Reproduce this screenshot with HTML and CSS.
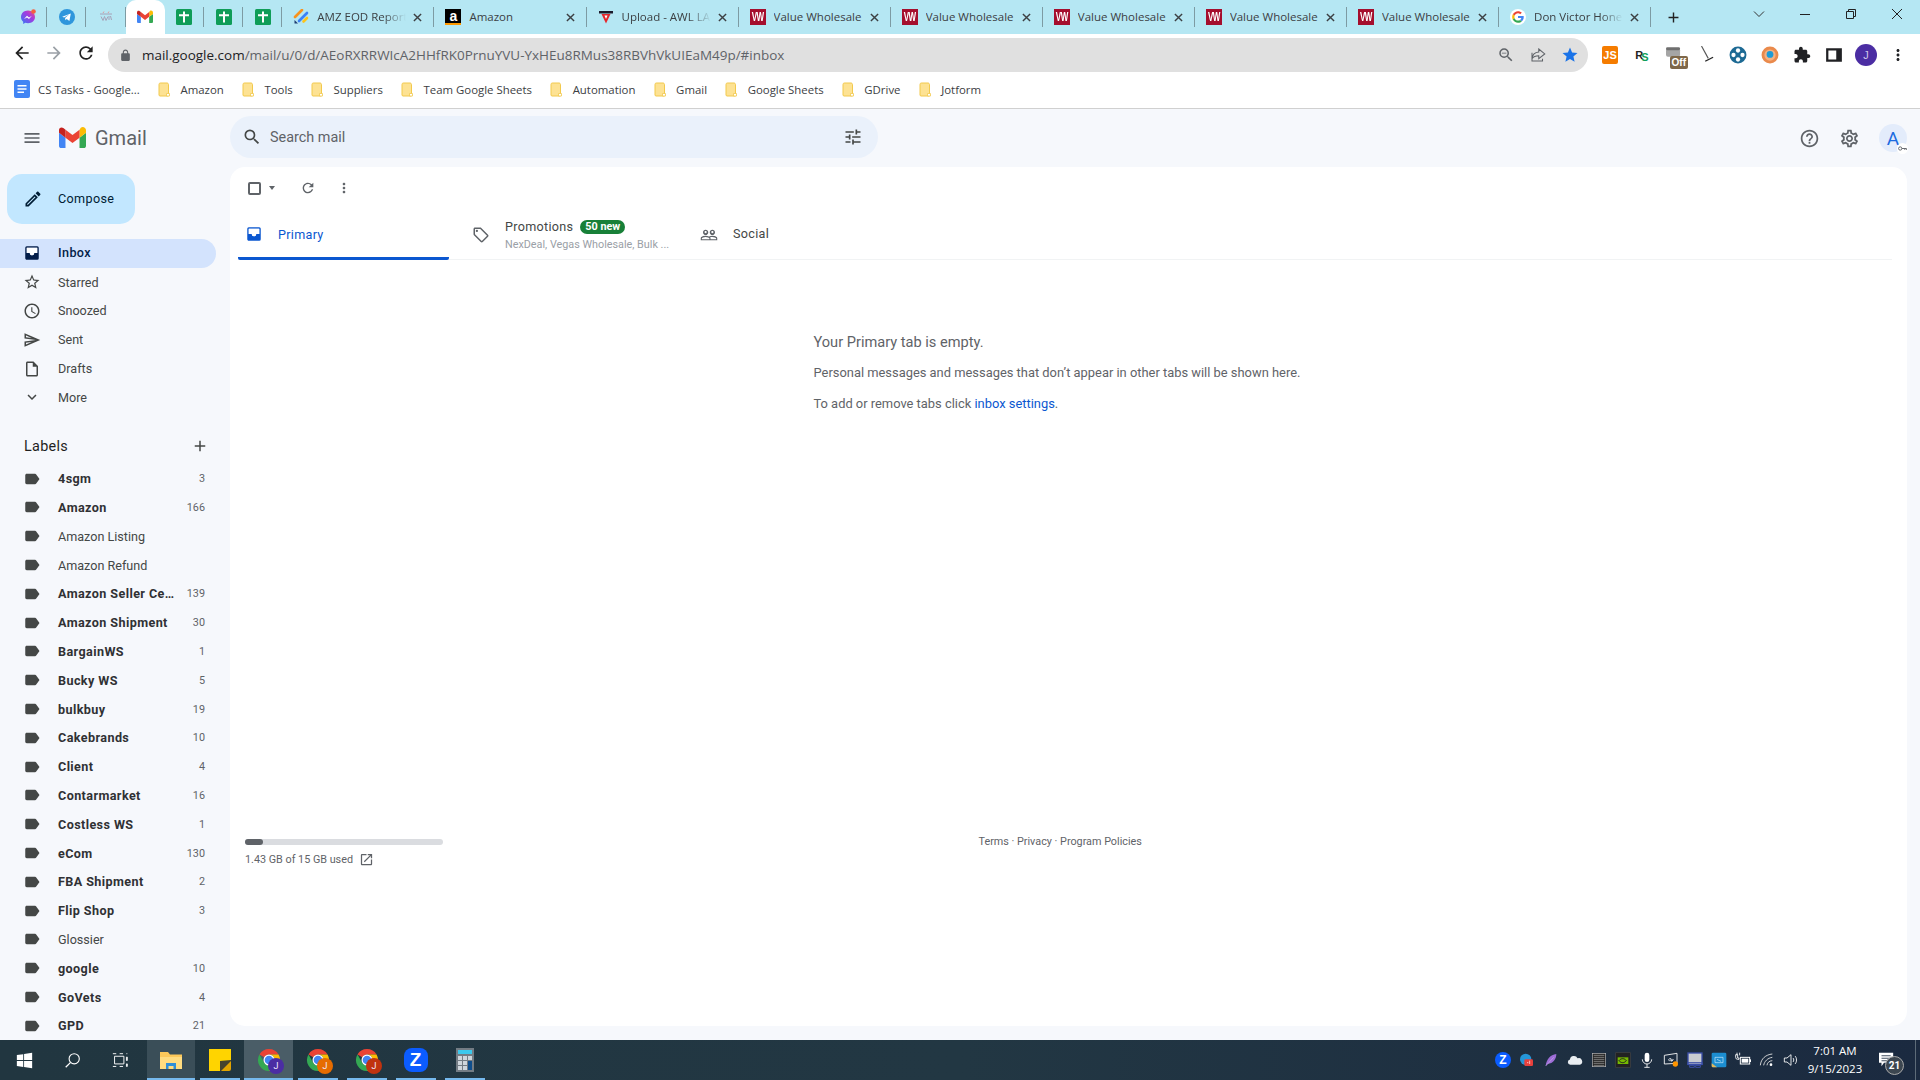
FILE: index.html
```html
<!DOCTYPE html>
<html lang="en">

<head>
  <meta charset="UTF-8">
  <title>Inbox - Gmail</title>
  <link rel="stylesheet" href="styles.css">
</head>

<body>

  <svg class="sprite" width="0" height="0">
    <symbol id="i-close" viewBox="0 0 10 10"><path d="M1 1l8 8M9 1l-8 8" stroke="currentColor" stroke-width="1.6" fill="none"/></symbol>
    <symbol id="i-sheets" viewBox="0 0 16 16"><rect width="16" height="16" rx="1.5" fill="#0f9d58"/><path d="M7 2.500h2v2.800h4v2H9v6.200H7V7.300H3v-2h4z" fill="#fff"/></symbol>
    <symbol id="i-folder" viewBox="0 0 12 15"><path d="M1 2.500C1 1.700 1.500 1 2.300 1H9c.8 0 1.500.7 1.500 1.500V14H2C1.400 14 1 13.500 1 13z" fill="#fde293" stroke="#f2c94c"/><path d="M8.500 14v-2.500h3V14z" fill="#fff" stroke="#f2c94c" stroke-width=".8"/></symbol>
    <symbol id="i-menu" viewBox="0 0 24 24"><path d="M3 18h18v-2H3v2zm0-5h18v-2H3v2zm0-7v2h18V6H3z"/></symbol>
    <symbol id="i-search" viewBox="0 0 24 24"><path d="M15.500 14h-.79l-.28-.27A6.471 6.471 0 0 0 16 9.500 6.500 6.500 0 1 0 9.500 16c1.610 0 3.090-.59 4.230-1.570l.27.28v.79l5 4.990L20.490 19l-4.990-5zm-6 0C7.010 14 5 11.990 5 9.500S7.010 5 9.500 5 14 7.010 14 9.500 11.990 14 9.500 14z"/></symbol>
    <symbol id="i-tune" viewBox="0 0 24 24"><path d="M3 17v2h6v-2H3zM3 5v2h10V5H3zm10 16v-2h8v-2h-8v-2h-2v6h2zM7 9v2H3v2h4v2h2V9H7zm14 4v-2H11v2h10zm-6-4h2V7h4V5h-4V3h-2v6z"/></symbol>
    <symbol id="i-inbox" viewBox="0 0 24 24"><path d="M19 3H5a2 2 0 0 0-2 2v14c0 1.100.9 2 2 2h14a2 2 0 0 0 2-2V5a2 2 0 0 0-2-2zm0 9h-4a3 3 0 0 1-6 0H5V5h14v7z"/><path d="M5 5h14v7h-4a3 3 0 0 1-6 0H5z" fill="#fff"/></symbol>
    <symbol id="i-label" viewBox="0 0 24 24"><path d="M17.630 5.840C17.270 5.330 16.670 5 16 5L5 5.010C3.900 5.010 3 5.900 3 7v10c0 1.100.9 1.990 2 1.990L16 19c.67 0 1.270-.33 1.630-.84L22 12l-4.370-6.160z"/></symbol>
    <symbol id="i-chrome" viewBox="0 0 24 24">
      <path fill="#ea4335" d="M12 1a11 11 0 0 1 9.530 5.500H12a5.500 5.500 0 0 0-4.760 2.750L2.470 6.500A11 11 0 0 1 12 1z"/>
      <path fill="#fbbc04" d="M21.530 6.500A11 11 0 0 1 12 23l4.760-8.250A5.500 5.500 0 0 0 12 6.500z"/>
      <path fill="#34a853" d="M2.470 6.500l4.770 8.250a5.500 5.500 0 0 0 9.520 0L12 23A11 11 0 0 1 2.470 6.500z"/>
      <circle cx="12" cy="12" r="5.500" fill="#fff"/>
      <circle cx="12" cy="12" r="4.300" fill="#4285f4"/>
    </symbol>
  </svg>

  <div class="tabstrip">
    <div class="tab tab_pinned">
      <svg class="fav" viewBox="0 0 16 16"><defs><linearGradient id="msg" x1="0" y1="1" x2="1" y2="0"><stop offset="0" stop-color="#2f7bf6"/><stop offset=".6" stop-color="#a33be0"/><stop offset="1" stop-color="#f5517a"/></linearGradient></defs><path d="M8 1.500C4 1.500 1 4.300 1 8c0 2 .8 3.600 2.200 4.800V15l2.100-1.200c.8.3 1.700.4 2.700.4 4 0 7-2.700 7-6.200s-3-6.500-7-6.500z" fill="url(#msg)"/><path d="M4 10l3-3.200 2 1.600 3-1.600-3 3.200-2-1.600z" fill="#fff"/><circle cx="13.500" cy="2.500" r="2.300" fill="#f4603f"/></svg>
    </div>
    <div class="tab tab_pinned">
      <svg class="fav" viewBox="0 0 16 16"><circle cx="8" cy="8" r="8" fill="#2f96dc"/><path d="M3.200 7.800l8.600-3.400-1.400 7.600-2.700-2-1.300 1.300-.3-2.400 3.900-3.300-4.900 2.800z" fill="#fff"/></svg>
    </div>
    <div class="tab tab_pinned">
      <svg class="fav" viewBox="0 0 16 16"><path d="M2 5h12M3 7.500l2 4 1.500-4 1.500 4 2-4M11 7v4M12.500 7l1 4" stroke="#a6a2b8" stroke-width="1" fill="none"/><path d="M5 4l1-1.500M10 4l1-1.500" stroke="#d99" fill="none"/></svg>
    </div>
    <div class="tab tab_pinned tab_active">
      <svg class="fav" viewBox="0 -2 75 60"><path fill="#4285f4" d="M6 56h12V27L0 13.500V50c0 3.300 2.700 6 6 6"/><path fill="#34a853" d="M57 56h12c3.300 0 6-2.700 6-6V13.500L57 27"/><path fill="#fbbc04" d="M57 5v22l18-13.500V6.500c0-7.400-8.500-11.600-14.400-7.200"/><path fill="#ea4335" d="M18 27V5l19.500 14.600L57 5v22L37.500 41.600"/><path fill="#c5221f" d="M0 6.500v7L18 27V5l-5-3.800C7-3.200 0-.9 0 6.500"/></svg>
    </div>
    <div class="tab tab_pinned"><svg class="fav"><use href="#i-sheets"/></svg></div>
    <div class="tab tab_pinned"><svg class="fav"><use href="#i-sheets"/></svg></div>
    <div class="tab tab_pinned"><svg class="fav"><use href="#i-sheets"/></svg></div>

    <div class="tab">
      <svg class="fav" viewBox="0 0 16 16"><path d="M9 1L2 8" stroke="#f7931e" stroke-width="2.600" stroke-linecap="round"/><path d="M14 4L6 12" stroke="#3b82f6" stroke-width="2.600" stroke-linecap="round"/><path d="M14 9l-3.500 3.500" stroke="#fcc419" stroke-width="2.600" stroke-linecap="round"/><path d="M1.500 11v3.500H5z" fill="#1c3a6e"/></svg>
      <span class="tab__title tab__title_fade">AMZ EOD Report</span>
      <svg class="tab__close"><use href="#i-close"/></svg>
    </div>
    <div class="tab">
      <span class="fav fav_amazon">a</span>
      <span class="tab__title">Amazon</span>
      <svg class="tab__close"><use href="#i-close"/></svg>
    </div>
    <div class="tab">
      <svg class="fav" viewBox="0 0 16 16"><path d="M1 2h14v2.500H1z" fill="#1b1b2b"/><path d="M3.500 5h9L8 14.500z" fill="#e5262b"/><path d="M6.500 6.500h3L8 10z" fill="#fff"/></svg>
      <span class="tab__title tab__title_fade">Upload - AWL LA</span>
      <svg class="tab__close"><use href="#i-close"/></svg>
    </div>
    <div class="tab">
      <span class="fav fav_vw"><span class="fav__tall">VW</span></span>
      <span class="tab__title">Value Wholesale</span>
      <svg class="tab__close"><use href="#i-close"/></svg>
    </div>
    <div class="tab">
      <span class="fav fav_vw"><span class="fav__tall">VW</span></span>
      <span class="tab__title">Value Wholesale</span>
      <svg class="tab__close"><use href="#i-close"/></svg>
    </div>
    <div class="tab">
      <span class="fav fav_vw"><span class="fav__tall">VW</span></span>
      <span class="tab__title">Value Wholesale</span>
      <svg class="tab__close"><use href="#i-close"/></svg>
    </div>
    <div class="tab">
      <span class="fav fav_vw"><span class="fav__tall">VW</span></span>
      <span class="tab__title">Value Wholesale</span>
      <svg class="tab__close"><use href="#i-close"/></svg>
    </div>
    <div class="tab">
      <span class="fav fav_vw"><span class="fav__tall">VW</span></span>
      <span class="tab__title">Value Wholesale</span>
      <svg class="tab__close"><use href="#i-close"/></svg>
    </div>
    <div class="tab">
      <svg class="fav" viewBox="0 0 48 48"><circle cx="24" cy="24" r="24" fill="#fff"/><path fill="#ea4335" d="M24 13c3 0 5.200 1.200 6.600 2.500l4.700-4.600C32.300 8.200 28.500 6.500 24 6.500 17.200 6.500 11.300 10.400 8.400 16.100l5.500 4.300C15.300 16.200 19.300 13 24 13z"/><path fill="#4285f4" d="M41.200 24.400c0-1.400-.1-2.500-.4-3.600H24v6.500h9.900c-.2 1.600-1.300 4.100-3.700 5.700l5.300 4.100c3.600-3.300 5.700-8.100 5.700-12.700z"/><path fill="#fbbc05" d="M13.900 27.600c-.4-1.100-.6-2.300-.6-3.600s.2-2.500.6-3.600l-5.500-4.300C7.200 18.500 6.500 21.200 6.500 24s.7 5.500 1.900 7.900z"/><path fill="#34a853" d="M24 41.500c4.700 0 8.700-1.600 11.500-4.300l-5.300-4.100c-1.500 1-3.400 1.700-6.200 1.700-4.700 0-8.700-3.200-10.100-7.400l-5.500 4.300c2.900 5.900 8.800 9.800 15.600 9.800z"/></svg>
      <span class="tab__title tab__title_fade">Don Victor Hone</span>
      <svg class="tab__close"><use href="#i-close"/></svg>
    </div>

    <svg class="new-tab" viewBox="0 0 24 24"><path d="M19 13h-6v6h-2v-6H5v-2h6V5h2v6h6v2z"/></svg>

    <div class="window-btns">
      <svg class="window-btn" viewBox="0 0 12 12"><path d="M1 3.500l5 5 5-5" fill="none" stroke="#333"/></svg>
      <svg class="window-btn" viewBox="0 0 12 12"><path d="M1 6.500h10" stroke="#222"/></svg>
      <svg class="window-btn" viewBox="0 0 12 12"><path d="M1.500 3.500h7v7h-7zM3.500 3.500v-2h7v7h-2" fill="none" stroke="#222"/></svg>
      <svg class="window-btn" viewBox="0 0 12 12"><path d="M1 1l10 10M11 1L1 11" stroke="#222"/></svg>
    </div>
  </div>

  <div class="toolbar">
    <svg class="toolbar__nav" viewBox="0 0 24 24"><path d="M20 11H7.830l5.590-5.590L12 4l-8 8 8 8 1.410-1.410L7.830 13H20v-2z"/></svg>
    <svg class="toolbar__nav toolbar__nav_off" viewBox="0 0 24 24"><path d="M12 4l-1.410 1.410L16.170 11H4v2h12.170l-5.580 5.590L12 20l8-8z"/></svg>
    <svg class="toolbar__nav" viewBox="0 0 24 24"><path d="M17.650 6.350A7.958 7.958 0 0 0 12 4c-4.420 0-7.990 3.580-7.990 8s3.570 8 7.990 8c3.730 0 6.840-2.550 7.730-6h-2.080A5.990 5.990 0 0 1 12 18c-3.310 0-6-2.690-6-6s2.690-6 6-6c1.660 0 3.140.69 4.220 1.780L13 11h7V4l-2.350 2.350z"/></svg>

    <div class="omnibox">
      <svg class="omnibox__lock" viewBox="0 0 24 24"><path d="M18 8h-1V6c0-2.760-2.240-5-5-5S7 3.240 7 6v2H6c-1.100 0-2 .9-2 2v10c0 1.100.9 2 2 2h12c1.100 0 2-.9 2-2V10c0-1.100-.9-2-2-2zM9 6c0-1.660 1.340-3 3-3s3 1.340 3 3v2H9V6z"/></svg>
      <span class="omnibox__url"><b class="omnibox__host">mail.google.com</b>/mail/u/0/d/AEoRXRRWIcA2HHfRK0PrnuYVU-YxHEu8RMus38RBVhVkUIEaM49p/#inbox</span>
      <svg class="omnibox__icon" viewBox="0 0 24 24"><path d="M15.500 14h-.79l-.28-.27A6.471 6.471 0 0 0 16 9.500 6.500 6.500 0 1 0 9.500 16c1.610 0 3.090-.59 4.230-1.570l.27.28v.79l5 4.990L20.490 19l-4.990-5zm-6 0C7.010 14 5 11.990 5 9.500S7.010 5 9.500 5 14 7.010 14 9.500 11.990 14 9.500 14z"/><path d="M6.500 9h6v1h-6z"/></svg>
      <svg class="omnibox__icon" viewBox="0 0 24 24"><path d="M13 4l8 6.500-8 6.500v-4c-4 0-7 1-9 4 .5-5 3.500-8.500 9-9z M4 9v11h14v-3" fill="none" stroke="#5f6368" stroke-width="1.400"/></svg>
      <svg class="omnibox__icon omnibox__icon_star" viewBox="0 0 24 24"><path d="M12 17.270L18.180 21l-1.640-7.030L22 9.240l-7.190-.61L12 2 9.190 8.630 2 9.240l5.460 4.730L5.820 21z"/></svg>
    </div>

    <div class="ext-bar">
      <span class="ext ext_js">JS</span>
      <span class="ext ext_rs">R<i>S</i></span>
      <span class="ext ext_off"><svg class="ext__can" viewBox="0 0 16 10"><rect x="0" y="1" width="15" height="9" rx="2" fill="#a5a5a5"/><rect x="0" y="0" width="15" height="3" rx="1.500" fill="#6f6f6f"/></svg><span class="ext__badge">Off</span></span>
      <svg class="ext" viewBox="0 0 16 16"><path d="M4 0l6 11" stroke="#555" fill="none"/><path d="M7 13l7-3.500.6 1-7 3.500z" fill="#222"/></svg>
      <svg class="ext" viewBox="0 0 16 16"><circle cx="8" cy="8" r="7.500" fill="#1d6a94"/><circle cx="8" cy="4" r="1.900" fill="#fff"/><circle cx="8" cy="12" r="1.900" fill="#fff"/><circle cx="4" cy="8" r="1.900" fill="#fff"/><circle cx="12" cy="8" r="1.900" fill="#fff"/></svg>
      <svg class="ext" viewBox="0 0 16 16"><circle cx="8" cy="8" r="7.500" fill="#ea8a4c"/><circle cx="8" cy="8" r="5" fill="#f4b183"/><circle cx="8" cy="7.500" r="3" fill="#1e9bd6"/></svg>
      <svg class="ext ext_icon" viewBox="0 0 24 24"><path d="M20.500 11H19V7c0-1.100-.9-2-2-2h-4V3.500C13 2.120 11.880 1 10.500 1S8 2.120 8 3.500V5H4c-1.100 0-1.990.9-1.990 2v3.800H3.500c1.490 0 2.700 1.210 2.700 2.700s-1.210 2.700-2.700 2.700H2V20c0 1.100.9 2 2 2h3.800v-1.500c0-1.490 1.210-2.700 2.700-2.700 1.490 0 2.700 1.210 2.700 2.700V22H17c1.100 0 2-.9 2-2v-4h1.500c1.380 0 2.500-1.120 2.500-2.500S21.880 11 20.500 11z"/></svg>
      <svg class="ext ext_icon" viewBox="0 0 16 16"><path d="M1 2h14v12H1zM3 4v8h7V4z" fill-rule="evenodd"/></svg>
      <span class="ext ext_avatar">J</span>
      <svg class="ext ext_icon" viewBox="0 0 24 24"><path d="M12 8c1.100 0 2-.9 2-2s-.9-2-2-2-2 .9-2 2 .9 2 2 2zm0 2c-1.100 0-2 .9-2 2s.9 2 2 2 2-.9 2-2-.9-2-2-2zm0 6c-1.100 0-2 .9-2 2s.9 2 2 2 2-.9 2-2-.9-2-2-2z"/></svg>
    </div>
  </div>

  <div class="bookmarks">
    <a class="bookmark">
      <svg class="bookmark__doc" viewBox="0 0 16 18"><path d="M2 0h12a2 2 0 0 1 2 2v14a2 2 0 0 1-2 2H2a2 2 0 0 1-2-2V2a2 2 0 0 1 2-2z" fill="#4285f4"/><path d="M3.500 5h9v1.500h-9zM3.500 8.300h9v1.500h-9zM3.500 11.600h6.500v1.500H3.500z" fill="#fff"/></svg>
      CS Tasks - Google...
    </a>
    <a class="bookmark"><svg class="bookmark__folder"><use href="#i-folder"/></svg>Amazon</a>
    <a class="bookmark"><svg class="bookmark__folder"><use href="#i-folder"/></svg>Tools</a>
    <a class="bookmark"><svg class="bookmark__folder"><use href="#i-folder"/></svg>Suppliers</a>
    <a class="bookmark"><svg class="bookmark__folder"><use href="#i-folder"/></svg>Team Google Sheets</a>
    <a class="bookmark"><svg class="bookmark__folder"><use href="#i-folder"/></svg>Automation</a>
    <a class="bookmark"><svg class="bookmark__folder"><use href="#i-folder"/></svg>Gmail</a>
    <a class="bookmark"><svg class="bookmark__folder"><use href="#i-folder"/></svg>Google Sheets</a>
    <a class="bookmark"><svg class="bookmark__folder"><use href="#i-folder"/></svg>GDrive</a>
    <a class="bookmark"><svg class="bookmark__folder"><use href="#i-folder"/></svg>Jotform</a>
  </div>

  <div class="gmail">
    <div class="brand">
      <svg class="brand__menu"><use href="#i-menu"/></svg>
      <svg class="brand__logo" viewBox="0 -2 75 60"><path fill="#4285f4" d="M6 56h12V27L0 13.500V50c0 3.300 2.700 6 6 6"/><path fill="#34a853" d="M57 56h12c3.300 0 6-2.700 6-6V13.500L57 27"/><path fill="#fbbc04" d="M57 5v22l18-13.500V6.500c0-7.400-8.500-11.600-14.400-7.200"/><path fill="#ea4335" d="M18 27V5l19.500 14.600L57 5v22L37.500 41.600"/><path fill="#c5221f" d="M0 6.500v7L18 27V5l-5-3.800C7-3.200 0-.9 0 6.500"/></svg>
      <span class="brand__name">Gmail</span>
    </div>

    <div class="topbar">
      <div class="search">
        <svg class="search__icon"><use href="#i-search"/></svg>
        <span class="search__text">Search mail</span>
        <svg class="search__tune"><use href="#i-tune"/></svg>
      </div>
      <div class="actions">
        <svg class="actions__icon" viewBox="0 0 24 24"><path d="M11 18h2v-2h-2v2zm1-16C6.480 2 2 6.480 2 12s4.480 10 10 10 10-4.480 10-10S17.520 2 12 2zm0 18c-4.410 0-8-3.590-8-8s3.590-8 8-8 8 3.590 8 8-3.590 8-8 8zm0-14c-2.210 0-4 1.790-4 4h2c0-1.100.9-2 2-2s2 .9 2 2c0 2-3 1.750-3 5h2c0-2.250 3-2.500 3-5 0-2.210-1.790-4-4-4z"/></svg>
        <svg class="actions__icon" viewBox="0 0 24 24"><path d="M19.430 12.980c.04-.32.07-.64.07-.98 0-.34-.03-.66-.07-.98l2.110-1.650c.19-.15.24-.42.12-.64l-2-3.460a.5.500 0 0 0-.61-.22l-2.490 1c-.52-.4-1.080-.73-1.690-.98l-.38-2.650A.488.488 0 0 0 14 2h-4c-.25 0-.46.18-.49.42l-.38 2.650c-.61.25-1.170.59-1.690.98l-2.490-1a.566.566 0 0 0-.18-.03c-.17 0-.34.09-.43.25l-2 3.460c-.13.22-.07.49.12.64l2.110 1.650c-.04.32-.07.65-.07.98 0 .33.03.66.07.98l-2.110 1.650c-.19.15-.24.42-.12.64l2 3.460a.5.500 0 0 0 .61.22l2.490-1c.52.4 1.080.73 1.690.98l.38 2.650c.03.24.24.42.49.42h4c.25 0 .46-.18.49-.42l.38-2.650c.61-.25 1.170-.59 1.690-.98l2.490 1c.06.02.12.03.18.03.17 0 .34-.09.43-.25l2-3.460c.12-.22.07-.49-.12-.64l-2.110-1.650zm-1.980-1.710c.04.31.05.52.05.73 0 .21-.02.43-.05.73l-.14 1.130.89.7 1.080.84-.7 1.210-1.270-.51-1.040-.42-.9.68c-.43.32-.84.56-1.250.73l-1.060.43-.16 1.130-.2 1.350h-1.400l-.19-1.350-.16-1.130-1.060-.43c-.43-.18-.83-.41-1.230-.71l-.91-.7-1.060.43-1.270.51-.7-1.210 1.080-.84.89-.7-.14-1.130c-.03-.31-.05-.54-.05-.74s.02-.43.05-.73l.14-1.130-.89-.7-1.080-.84.7-1.210 1.270.51 1.040.42.9-.68c.43-.32.84-.56 1.250-.73l1.060-.43.16-1.130.2-1.350h1.390l.19 1.350.16 1.130 1.060.43c.43.18.83.41 1.230.71l.91.7 1.060-.43 1.270-.51.7 1.210-1.070.85-.89.7.14 1.130zM12 8c-2.210 0-4 1.790-4 4s1.790 4 4 4 4-1.790 4-4-1.790-4-4-4zm0 6c-1.100 0-2-.9-2-2s.9-2 2-2 2 .9 2 2-.9 2-2 2z"/></svg>
        <div class="account">A
          <span class="account__key"><svg viewBox="0 0 12 12"><circle cx="3.500" cy="6" r="1.800" fill="none" stroke="#5f6368"/><path d="M5.300 6h5v1.500M8.500 6v1.500" fill="none" stroke="#5f6368"/></svg></span>
        </div>
      </div>
    </div>

    <aside class="sidebar">
      <button class="compose">
        <svg class="compose__icon" viewBox="0 0 24 24"><path d="M14.060 9.020l.92.92L5.920 19H5v-.92l9.060-9.060M17.660 3c-.25 0-.51.1-.7.29l-1.830 1.830 3.750 3.750 1.830-1.830a.996.996 0 0 0 0-1.410l-2.340-2.340c-.2-.2-.45-.29-.71-.29zm-3.600 3.190L3 17.250V21h3.750L17.810 9.940l-3.750-3.750z"/></svg>
        Compose
      </button>

      <nav class="nav">
        <a class="nav__item nav__item_active"><svg class="nav__icon"><use href="#i-inbox"/></svg>Inbox</a>
        <a class="nav__item"><svg class="nav__icon" viewBox="0 0 24 24"><path d="M22 9.240l-7.190-.62L12 2 9.190 8.630 2 9.240l5.460 4.730L5.820 21 12 17.270 18.180 21l-1.630-7.030L22 9.240zM12 15.400l-3.760 2.270 1-4.280-3.320-2.880 4.380-.38L12 6.100l1.710 4.040 4.380.38-3.320 2.880 1 4.280L12 15.400z"/></svg>Starred</a>
        <a class="nav__item"><svg class="nav__icon" viewBox="0 0 24 24"><path d="M11.990 2C6.470 2 2 6.480 2 12s4.470 10 9.990 10C17.520 22 22 17.520 22 12S17.520 2 11.990 2zM12 20c-4.420 0-8-3.580-8-8s3.580-8 8-8 8 3.580 8 8-3.580 8-8 8zm.5-13H11v6l5.250 3.150.75-1.230-4.500-2.670z"/></svg>Snoozed</a>
        <a class="nav__item"><svg class="nav__icon" viewBox="0 0 24 24"><path d="M4.010 6.030l7.510 3.220-7.520-1 .01-2.220m7.500 8.720L4 17.970v-2.220l7.510-1M2.010 3L2 10l15 2-15 2 .01 7L23 12 2.010 3z"/></svg>Sent</a>
        <a class="nav__item"><svg class="nav__icon" viewBox="0 0 24 24"><path d="M14 2H6c-1.100 0-1.990.9-1.990 2L4 20c0 1.100.89 2 1.990 2H18c1.100 0 2-.9 2-2V8l-6-6zM6 20V4h7v5h5v11H6z"/></svg>Drafts</a>
        <a class="nav__item"><svg class="nav__icon" viewBox="0 0 24 24"><path d="M16.590 8.590L12 13.170 7.410 8.590 6 10l6 6 6-6z"/></svg>More</a>
      </nav>

      <div class="labels-head">
        <span>Labels</span>
        <svg class="labels-head__add" viewBox="0 0 24 24"><path d="M19 13h-6v6h-2v-6H5v-2h6V5h2v6h6v2z"/></svg>
      </div>

      <div class="labels">
        <a class="label label_unread"><svg class="nav__icon"><use href="#i-label"/></svg><span class="label__name">4sgm</span><span class="label__count">3</span></a>
        <a class="label label_unread"><svg class="nav__icon"><use href="#i-label"/></svg><span class="label__name">Amazon</span><span class="label__count">166</span></a>
        <a class="label"><svg class="nav__icon"><use href="#i-label"/></svg><span class="label__name">Amazon Listing</span></a>
        <a class="label"><svg class="nav__icon"><use href="#i-label"/></svg><span class="label__name">Amazon Refund</span></a>
        <a class="label label_unread"><svg class="nav__icon"><use href="#i-label"/></svg><span class="label__name">Amazon Seller Ce…</span><span class="label__count">139</span></a>
        <a class="label label_unread"><svg class="nav__icon"><use href="#i-label"/></svg><span class="label__name">Amazon Shipment</span><span class="label__count">30</span></a>
        <a class="label label_unread"><svg class="nav__icon"><use href="#i-label"/></svg><span class="label__name">BargainWS</span><span class="label__count">1</span></a>
        <a class="label label_unread"><svg class="nav__icon"><use href="#i-label"/></svg><span class="label__name">Bucky WS</span><span class="label__count">5</span></a>
        <a class="label label_unread"><svg class="nav__icon"><use href="#i-label"/></svg><span class="label__name">bulkbuy</span><span class="label__count">19</span></a>
        <a class="label label_unread"><svg class="nav__icon"><use href="#i-label"/></svg><span class="label__name">Cakebrands</span><span class="label__count">10</span></a>
        <a class="label label_unread"><svg class="nav__icon"><use href="#i-label"/></svg><span class="label__name">Client</span><span class="label__count">4</span></a>
        <a class="label label_unread"><svg class="nav__icon"><use href="#i-label"/></svg><span class="label__name">Contarmarket</span><span class="label__count">16</span></a>
        <a class="label label_unread"><svg class="nav__icon"><use href="#i-label"/></svg><span class="label__name">Costless WS</span><span class="label__count">1</span></a>
        <a class="label label_unread"><svg class="nav__icon"><use href="#i-label"/></svg><span class="label__name">eCom</span><span class="label__count">130</span></a>
        <a class="label label_unread"><svg class="nav__icon"><use href="#i-label"/></svg><span class="label__name">FBA Shipment</span><span class="label__count">2</span></a>
        <a class="label label_unread"><svg class="nav__icon"><use href="#i-label"/></svg><span class="label__name">Flip Shop</span><span class="label__count">3</span></a>
        <a class="label"><svg class="nav__icon"><use href="#i-label"/></svg><span class="label__name">Glossier</span></a>
        <a class="label label_unread"><svg class="nav__icon"><use href="#i-label"/></svg><span class="label__name">google</span><span class="label__count">10</span></a>
        <a class="label label_unread"><svg class="nav__icon"><use href="#i-label"/></svg><span class="label__name">GoVets</span><span class="label__count">4</span></a>
        <a class="label label_unread"><svg class="nav__icon"><use href="#i-label"/></svg><span class="label__name">GPD</span><span class="label__count">21</span></a>
      </div>
    </aside>

    <main class="panel">
      <div class="mail-tools">
        <span class="mail-tools__check"></span>
        <span class="mail-tools__caret"></span>
        <svg class="mail-tools__refresh" viewBox="0 0 24 24"><path d="M17.650 6.350A7.958 7.958 0 0 0 12 4c-4.420 0-7.990 3.580-7.990 8s3.570 8 7.990 8c3.730 0 6.840-2.550 7.730-6h-2.080A5.990 5.990 0 0 1 12 18c-3.310 0-6-2.690-6-6s2.690-6 6-6c1.660 0 3.140.69 4.220 1.780L13 11h7V4l-2.350 2.350z"/></svg>
        <svg class="mail-tools__more" viewBox="0 0 24 24"><path d="M12 8c1.100 0 2-.9 2-2s-.9-2-2-2-2 .9-2 2 .9 2 2 2zm0 2c-1.100 0-2 .9-2 2s.9 2 2 2 2-.9 2-2-.9-2-2-2zm0 6c-1.100 0-2 .9-2 2s.9 2 2 2 2-.9 2-2-.9-2-2-2z"/></svg>
      </div>

      <div class="mail-tabs">
        <div class="mail-tab mail-tab_active">
          <svg class="mail-tab__icon"><use href="#i-inbox"/></svg>
          <span class="mail-tab__name">Primary</span>
        </div>
        <div class="mail-tab">
          <svg class="mail-tab__icon mail-tab__icon_low" viewBox="0 0 24 24"><path d="M21.410 11.580l-9-9C12.050 2.220 11.550 2 11 2H4c-1.100 0-2 .9-2 2v7c0 .55.22 1.050.59 1.420l9 9c.36.36.86.58 1.410.58s1.050-.22 1.410-.59l7-7c.37-.36.59-.86.59-1.410s-.23-1.060-.59-1.420zM13 20.010L4 11V4h7v-.01l9 9-7 7.020z"/><circle cx="6.500" cy="6.500" r="1.500"/></svg>
          <div class="mail-tab__text">
            <div class="mail-tab__row">
              <span class="mail-tab__name">Promotions</span>
              <span class="mail-tab__badge">50 new</span>
            </div>
            <div class="mail-tab__sub">NexDeal, Vegas Wholesale, Bulk ...</div>
          </div>
        </div>
        <div class="mail-tab">
          <svg class="mail-tab__icon mail-tab__icon_low" viewBox="0 0 24 24"><path d="M16.500 13c-1.200 0-3.070.34-4.500 1-1.430-.67-3.300-1-4.500-1C5.330 13 1 14.080 1 16.250V19h22v-2.750c0-2.170-4.330-3.250-6.500-3.250zm-4 4.500h-10v-1.250c0-.54 2.560-1.750 5-1.750s5 1.210 5 1.750v1.250zm9 0H14v-1.250c0-.46-.2-.86-.52-1.220.88-.3 1.960-.53 3.020-.53 2.440 0 5 1.210 5 1.750v1.250zM7.500 12c1.930 0 3.500-1.570 3.500-3.500S9.430 5 7.500 5 4 6.570 4 8.500 5.570 12 7.500 12zm0-5.500c.83 0 1.500.67 1.500 1.500s-.67 1.500-1.500 1.500S6 8.830 6 8s.67-1.500 1.500-1.500zm9 5.500c1.930 0 3.500-1.570 3.500-3.500S18.430 5 16.500 5 13 6.570 13 8.500s1.570 3.500 3.500 3.500zm0-5.500c.83 0 1.500.67 1.500 1.500s-.67 1.500-1.500 1.500S15 8.830 15 8s.67-1.500 1.500-1.500z"/></svg>
          <span class="mail-tab__name mail-tab__name_up">Social</span>
        </div>
      </div>

      <div class="empty">
        <h2 class="empty__title">Your Primary tab is empty.</h2>
        <p class="empty__text">Personal messages and messages that don’t appear in other tabs will be shown here.</p>
        <p class="empty__text">To add or remove tabs click <a class="empty__link">inbox settings</a>.</p>
      </div>

      <footer class="mail-footer">
        <div class="storage">
          <div class="storage__bar"><div class="storage__fill"></div></div>
          <div class="storage__text">1.43 GB of 15 GB used
            <svg class="storage__open" viewBox="0 0 24 24"><path d="M19 19H5V5h7V3H5c-1.110 0-2 .9-2 2v14c0 1.100.89 2 2 2h14c1.100 0 2-.9 2-2v-7h-2v7zM14 3v2h3.590l-9.830 9.830 1.410 1.410L19 6.410V10h2V3h-7z"/></svg>
          </div>
        </div>
        <div class="policies">Terms · Privacy · Program Policies</div>
      </footer>
    </main>
  </div>

  <div class="taskbar">
    <div class="taskbar__start">
      <svg class="tb-icon" viewBox="0 0 20 20"><path d="M1 3.500l7.500-1v7H1zM9.500 2.300L19 1v8.500H9.500zM1 10.500h7.500v7l-7.500-1zM9.500 10.500H19V19l-9.500-1.300z" fill="#fff"/></svg>
    </div>
    <div class="taskbar__start">
      <svg class="tb-icon" viewBox="0 0 20 20"><circle cx="12" cy="8" r="6" fill="none" stroke="#fff" stroke-width="1.300"/><path d="M7.500 12.500L2 18" stroke="#fff" stroke-width="1.500"/></svg>
    </div>
    <div class="taskbar__start">
      <svg class="tb-icon" viewBox="0 0 20 20"><path d="M3 5h11v9H3zM1 2h4M9 2h4M1 17h4M9 17h4M17 2h1M17 6h1v4h-1zM17 14h1v3h-1z" fill="none" stroke="#fff" stroke-width="1.100"/></svg>
    </div>

    <div class="app app_open">
      <svg class="app__icon" viewBox="0 0 24 24"><path d="M1 4h8l2 2.500h12V21H1z" fill="#fcc85a"/><path d="M1 9h22v12H1z" fill="#ffdc80"/><path d="M7 15h10v6h-2.500v-3h-5v3H7z" fill="#2f8fd8"/></svg>
    </div>
    <div class="app app_running">
      <svg class="app__icon" viewBox="0 0 24 24"><path d="M1 1h22v14l-8 8H1z" fill="#ffd400"/><path d="M23 12v9a2 2 0 0 1-2 2h-9z" fill="#e2a400"/><path d="M13 23l10-10v-1l-11 1v10z" fill="#333" opacity=".9"/></svg>
    </div>
    <div class="app app_active">
      <svg class="app__icon"><use href="#i-chrome"/></svg>
      <span class="app__badge app__badge_purple">J</span>
    </div>
    <div class="app app_running">
      <svg class="app__icon"><use href="#i-chrome"/></svg>
      <span class="app__badge app__badge_orange">J</span>
    </div>
    <div class="app app_running">
      <svg class="app__icon"><use href="#i-chrome"/></svg>
      <span class="app__badge app__badge_red">J</span>
    </div>
    <div class="app app_running">
      <span class="app__zoom">Z</span>
    </div>
    <div class="app app_running">
      <svg class="app__icon" viewBox="0 0 24 24"><rect x="3" y="0" width="18" height="24" fill="#737c84"/><rect x="5" y="2" width="14" height="4" fill="#3cc8ec"/><path d="M5 8h4v4H5zM10 8h4v4h-4zM15 8h4v4h-4zM5 13h4v4H5zM10 13h4v4h-4zM5 18h4v4H5zM10 18h4v4h-4z" fill="#cfd6dc"/><rect x="15" y="13" width="4" height="9" fill="#0f4e8c"/></svg>
    </div>

    <div class="tray">
      <span class="tray__item"><span class="tray__zoom">Z</span></span>
      <svg class="tray__item" viewBox="0 0 24 24"><circle cx="10" cy="11" r="8.500" fill="#2596d8"/><rect x="8" y="11" width="13" height="10" rx="2" fill="#e8403c"/><path d="M12 16h2M16 13v5" stroke="#fff"/></svg>
      <svg class="tray__item" viewBox="0 0 24 24"><path d="M4 21C5 11 11 4 20 3c0 8-5 14-13 15z" fill="#9d6dd6"/><path d="M4 21L16 8" stroke="#d6b9f2" stroke-width=".8"/></svg>
      <svg class="tray__item" viewBox="0 0 24 24"><path d="M5 19a4 4 0 0 1-.6-7.900A6 6 0 0 1 15.800 9.500 4.800 4.800 0 0 1 19.500 19z" fill="#e9edf1"/></svg>
      <svg class="tray__item" viewBox="0 0 24 24"><rect x="2" y="2" width="20" height="20" fill="#222" stroke="#bbb"/><path d="M4 5h16M4 8h16M4 11h16M4 14h16M4 17h16M4 20h16" stroke="#aaa"/></svg>
      <svg class="tray__item" viewBox="0 0 24 24"><rect x="1" y="1" width="22" height="22" fill="#222" stroke="#444"/><path d="M4 8h16v10H4z" fill="#76b900"/><path d="M6 13c3-4 8-4 11 0-3 4-8 4-11 0z" fill="none" stroke="#222" stroke-width="1.500"/></svg>
      <svg class="tray__item" viewBox="0 0 24 24"><rect x="8.500" y="1" width="7" height="14" rx="3.500" fill="#fff"/><path d="M5 11a7 7 0 0 0 14 0M12 18v5M8 23h8" fill="none" stroke="#fff" stroke-width="1.300"/></svg>
      <svg class="tray__item" viewBox="0 0 24 24"><path d="M2 5l19-3v15l-19 1z" fill="none" stroke="#fff" stroke-width="1.300"/><path d="M8 12l3-3v2h3v2H9zM16 11l-3 3v-2" fill="none" stroke="#fff"/><circle cx="18.500" cy="18" r="4" fill="#ff9500"/></svg>
      <svg class="tray__item" viewBox="0 0 24 24"><rect x="1.500" y="1.500" width="21" height="17" fill="#c9ccd1" stroke="#3b4fa8" stroke-width="2"/><path d="M1 16h22v3H1zM4 20h7v3H4zM13 20h7v3h-7z" fill="none" stroke="#3b4fa8" stroke-width="1.500"/></svg>
      <svg class="tray__item" viewBox="0 0 24 24"><rect x="1" y="1" width="22" height="22" rx="2" fill="#1c8ed1"/><path d="M1 17l8 6H3a2 2 0 0 1-2-2z" fill="#e2b85a"/><path d="M6 8h12v8H6zM9 11l6 3" fill="none" stroke="#cdeafa"/></svg>
      <svg class="tray__item" viewBox="0 0 24 24"><path d="M1 4v4a3 3 0 0 0 3 3h2v-2H4V4zM3 1v4M7 1v4" stroke="#fff" fill="none" stroke-width="1.300"/><rect x="8" y="8" width="14" height="10" fill="none" stroke="#fff" stroke-width="1.500"/><rect x="10" y="10" width="10" height="6" fill="#fff"/><rect x="22" y="11" width="2" height="4" fill="#fff"/></svg>
      <svg class="tray__item" viewBox="0 0 24 24"><path d="M2 20C3 10 10 4 20 3M7 20c1-6 6-11 13-12M12 20c0-3 3-7 8-7" fill="none" stroke="#e6e6e6" stroke-width="1.300"/><circle cx="18" cy="19" r="2" fill="#fff"/></svg>
      <svg class="tray__item" viewBox="0 0 24 24"><path d="M2 9h4l6-5v16l-6-5H2z" fill="none" stroke="#fff" stroke-width="1.300"/><path d="M15 9c1.500 1.500 1.500 4.500 0 6M18 6c3 3 3 9 0 12" fill="none" stroke="#fff" stroke-width="1.300"/></svg>

      <div class="clock">
        <div>7:01 AM</div>
        <div>9/15/2023</div>
      </div>

      <div class="notify">
        <svg class="notify__icon" viewBox="0 0 20 18"><path d="M1 1h17v12H7l-3 4v-4H1z" fill="#fff"/><path d="M4 4.500h11M4 7.500h11M4 10.500h7" stroke="#1b2a3f"/></svg>
        <span class="notify__count">21</span>
      </div>
      <span class="show-desktop"></span>
    </div>
  </div>

</body>

</html>
```

FILE: styles.css
```css
html,
body {
  margin: 0;
  height: 100%;
  overflow: hidden;
  font-family: Roboto, Arial, sans-serif;
  -webkit-font-smoothing: antialiased;
}

body {
  display: flex;
  flex-direction: column;
  width: 1920px;
  height: 1080px;
  background: #f6f8fc;
}

svg {
  display: block;
  flex-shrink: 0;
}

a {
  color: inherit;
  text-decoration: none;
}

.sprite {
  position: absolute;
}

/* browser tabs */

.tabstrip {
  display: flex;
  flex-shrink: 0;
  height: 34px;
  padding-left: 8px;
  background: #b5e7f3;
  font-family: "Open Sans", Arial, sans-serif;
}

.tab {
  position: relative;
  display: flex;
  align-items: center;
  box-sizing: border-box;
  width: 152.100px;
  padding: 0 12px 0 11px;
  font-size: 11.500px;
  color: #3c4043;
}

.tab::after {
  content: "";
  position: absolute;
  top: 7px;
  right: 0;
  width: 1px;
  height: 20px;
  background: #7d9ba3;
}

.tab_pinned {
  justify-content: center;
  width: 39.200px;
  padding: 0;
}

.tab_active {
  background: #fff;
  border-radius: 10px 10px 0 0;
}

.tab_active::after {
  display: none;
}

.fav {
  flex-shrink: 0;
  width: 16px;
  height: 16px;
}

.fav_vw {
  display: flex;
  align-items: center;
  justify-content: center;
  overflow: hidden;
  background: #a50e2d;
  color: #fff;
  font-family: "Liberation Sans", sans-serif;
  font-size: 8px;
  font-weight: bold;
  letter-spacing: -.5px;
}

.fav__tall {
  display: block;
  transform: scaleY(1.500);
}

.fav_amazon {
  display: flex;
  align-items: center;
  justify-content: center;
  background: #000;
  color: #fff;
  font-family: "Liberation Sans", sans-serif;
  font-size: 14px;
  font-weight: bold;
  line-height: 1;
  border-bottom: 2px solid #f90;
  box-sizing: border-box;
}

.tab__title {
  flex: 1;
  margin-left: 8px;
  padding-bottom: 1px;
  overflow: hidden;
  white-space: nowrap;
}

.tab__title_fade {
  -webkit-mask-image: linear-gradient(to right, #000 75%, transparent);
  mask-image: linear-gradient(to right, #000 75%, transparent);
}

.tab__close {
  width: 9px;
  height: 9px;
  margin-left: 7px;
  color: #3c4043;
}

.new-tab {
  width: 17px;
  height: 17px;
  margin: 9px 0 0 14px;
  fill: #222;
}

.window-btns {
  display: flex;
  margin-left: auto;
  padding-right: 17px;
  gap: 34px;
  padding-top: 8px;
}

.window-btn {
  width: 12px;
  height: 12px;
}

/* address bar */

.toolbar {
  display: flex;
  align-items: center;
  flex-shrink: 0;
  height: 38px;
  padding-left: 12px;
  background: #fff;
}

.toolbar__nav {
  width: 20px;
  height: 20px;
  margin-right: 12px;
  fill: #222;
}

.toolbar__nav_off {
  fill: #9aa0a6;
}

.omnibox {
  display: flex;
  align-items: center;
  box-sizing: border-box;
  width: 1480px;
  height: 34px;
  margin-top: 4px;
  padding-left: 11px;
  background: #e0e0e0;
  border-radius: 17px;
}

.omnibox__lock {
  width: 13px;
  height: 13px;
  fill: #5f6368;
}

.omnibox__url {
  flex: 1;
  margin-left: 10px;
  font-family: "Open Sans", Arial, sans-serif;
  font-size: 13.470px;
  color: #5f6368;
  white-space: nowrap;
}

.omnibox__host {
  font-weight: normal;
  color: #202124;
}

.omnibox__icon {
  width: 18px;
  height: 18px;
  margin-right: 14px;
  fill: #5f6368;
}

.omnibox__icon_star {
  margin-right: 9px;
  fill: #1a73e8;
}

.ext-bar {
  display: grid;
  grid-template-columns: repeat(10, 32px);
  align-items: center;
  justify-items: center;
  margin: 4px 0 0 6px;
}

.ext {
  display: flex;
  align-items: center;
  justify-content: center;
  width: 18px;
  height: 18px;
  font-family: "Liberation Sans", sans-serif;
  font-weight: bold;
}

.ext_js {
  height: 18px;
  background: #f57c00;
  color: #fff;
  font-size: 11px;
  border-radius: 2px;
  width: 16px;
}

.ext_rs {
  font-size: 11px;
  color: #222;
}

.ext_rs i {
  font-style: normal;
  color: #0f9d58;
  margin: 3px 0 0 -2px;
}

.ext_off {
  position: relative;
  width: 22px;
  margin-left: 4px;
}

.ext__can {
  width: 15px;
  height: 10px;
  margin: -6px 6px 0 0;
}

.ext__badge {
  position: absolute;
  right: -1px;
  bottom: -5px;
  padding: 1px 2px;
  background: #7e6749;
  color: #fff;
  font-size: 10px;
  line-height: 11px;
  border-radius: 2px;
}

.ext_icon {
  fill: #202124;
}

.ext_avatar {
  width: 22px;
  height: 22px;
  background: #4b2da3;
  color: #cfc6ea;
  font-size: 11px;
  font-weight: normal;
  border-radius: 50%;
}

/* bookmarks */

.bookmarks {
  display: flex;
  align-items: center;
  flex-shrink: 0;
  box-sizing: border-box;
  height: 37px;
  padding: 0 0 2px 14px;
  background: #fff;
  border-bottom: 1px solid #d0d0d0;
  font-family: "Open Sans", Arial, sans-serif;
  font-size: 11.400px;
  color: #3c4043;
}

.bookmark {
  display: flex;
  align-items: center;
  margin-right: 18.200px;
  white-space: nowrap;
}

.bookmark__doc {
  width: 16px;
  height: 18px;
  margin-right: 8px;
}

.bookmark__folder {
  width: 12px;
  height: 15px;
  margin-right: 10.500px;
}

/* gmail */

.gmail {
  flex: 1;
  min-height: 0;
  display: grid;
  grid-template-columns: 230px 1fr;
  grid-template-rows: 58px 1fr;
  background: #f6f8fc;
}

.brand {
  display: flex;
  align-items: center;
  padding-left: 22px;
}

.brand__menu {
  width: 20px;
  height: 20px;
  fill: #5f6368;
}

.brand__logo {
  width: 27px;
  height: 22px;
  margin-left: 17px;
}

.brand__name {
  margin-left: 9px;
  font-size: 20px;
  color: #5f6368;
}

.topbar {
  display: flex;
  align-items: center;
  padding-right: 13px;
}

.search {
  display: flex;
  align-items: center;
  box-sizing: border-box;
  width: 648px;
  height: 42px;
  margin-top: -2px;
  padding: 0 15px 0 12px;
  background: #eaf1fb;
  border-radius: 21px;
}

.search__icon {
  width: 20px;
  height: 20px;
  fill: #444746;
}

.search__text {
  flex: 1;
  margin-left: 8px;
  font-size: 14.400px;
  color: #5f6368;
}

.search__tune {
  width: 20px;
  height: 20px;
  fill: #444746;
}

.actions {
  display: flex;
  align-items: center;
  gap: 19px;
  margin-left: auto;
}

.actions__icon {
  width: 21px;
  height: 21px;
  fill: #5f6368;
}

.account {
  position: relative;
  display: flex;
  align-items: center;
  justify-content: center;
  width: 28px;
  height: 28px;
  background: #e3ecfb;
  color: #1a6ae0;
  font-size: 19px;
  border-radius: 50%;
}

.account__key {
  position: absolute;
  right: -1px;
  bottom: -2px;
  width: 11px;
  height: 11px;
  background: #fff;
  border-radius: 50%;
}

/* sidebar */

.sidebar {
  min-height: 0;
  overflow: hidden;
}

.compose {
  display: flex;
  align-items: center;
  width: 128px;
  height: 50px;
  margin: 7px 0 0 7px;
  padding: 0 0 2px 16px;
  border: none;
  border-radius: 15px;
  background: #c2e7ff;
  font-family: inherit;
  font-size: 12.600px;
  font-weight: 400;
  letter-spacing: .35px;
  color: #001d35;
}

.compose__icon {
  width: 20px;
  height: 20px;
  margin: 2px 15px 0 0;
  fill: #001d35;
}

.nav {
  margin-top: 15px;
}

.nav__item,
.label {
  display: flex;
  align-items: center;
  height: 28.800px;
  padding-left: 23px;
  font-size: 12.600px;
  color: #444746;
}

.nav__item_active {
  box-sizing: border-box;
  width: 216px;
  padding-bottom: 1px;
  background: #d3e3fd;
  border-radius: 0 15px 15px 0;
  font-weight: 500;
  letter-spacing: .4px;
  color: #041e49;
}

.nav__item_active .nav__icon {
  fill: #041e49;
}

.nav__icon {
  width: 18px;
  height: 18px;
  margin-right: 17px;
  fill: #444746;
}

.labels-head {
  display: flex;
  align-items: center;
  justify-content: space-between;
  box-sizing: border-box;
  height: 34.500px;
  margin-top: 18px;
  padding: 0 21px 2px 24px;
  font-size: 14.400px;
  letter-spacing: .3px;
  color: #1f1f1f;
}

.labels-head__add {
  width: 18px;
  height: 18px;
  fill: #444746;
}

.label {
  padding-right: 25px;
}

.label_unread {
  font-weight: 700;
  letter-spacing: .4px;
  color: #303134;
}

.label__name {
  flex: 1;
  min-width: 0;
  white-space: nowrap;
}

.label__count {
  margin-left: 8px;
  font-size: 10.800px;
  font-weight: 400;
  letter-spacing: 0;
  color: #5f6368;
}

/* mail panel */

.panel {
  display: flex;
  flex-direction: column;
  margin: 0 13px 14px 0;
  background: #fff;
  border-radius: 15px;
}

.mail-tools {
  display: flex;
  align-items: center;
  height: 42px;
  padding-left: 18px;
}

.mail-tools__check {
  box-sizing: border-box;
  width: 13px;
  height: 13px;
  border: 2px solid #5f6368;
  border-radius: 2px;
}

.mail-tools__caret {
  margin-left: 8px;
  border-top: 4px solid #5f6368;
  border-left: 3.500px solid transparent;
  border-right: 3.500px solid transparent;
}

.mail-tools__refresh {
  width: 16px;
  height: 16px;
  margin-left: 25px;
  fill: #5f6368;
}

.mail-tools__more {
  width: 16px;
  height: 16px;
  margin-left: 20px;
  fill: #5f6368;
}

.mail-tabs {
  display: flex;
  gap: 16px;
  height: 51px;
  margin: 0 15px 0 8px;
  border-bottom: 1px solid #f1f3f4;
  box-sizing: border-box;
}

.mail-tab {
  display: flex;
  align-items: center;
  box-sizing: border-box;
  width: 212px;
  height: 51px;
  padding: 2px 0 0 7px;
  border-bottom: 3px solid transparent;
  color: #444746;
}

.mail-tab:first-child {
  width: 211px;
}

.mail-tab_active {
  border-bottom-color: #0b57d0;
  border-radius: 0 0 2px 2px;
  color: #0b57d0;
}

.mail-tab__icon {
  width: 18px;
  height: 18px;
  margin-right: 15px;
  fill: #5f6368;
}

.mail-tab__icon_low {
  margin-top: 2px;
}

.mail-tab_active .mail-tab__icon {
  fill: #0b57d0;
}

.mail-tab__name {
  font-size: 12.600px;
  font-weight: 400;
  letter-spacing: .3px;
}

.mail-tab__name_up {
  padding-bottom: 2px;
}

.mail-tab__text {
  margin-top: 2px;
}

.mail-tab__row {
  display: flex;
  align-items: center;
}

.mail-tab__badge {
  margin-left: 7px;
  padding: 0 5px;
  background: #188038;
  color: #fff;
  font-size: 10.800px;
  font-weight: 700;
  line-height: 14px;
  border-radius: 7px;
}

.mail-tab__sub {
  margin-top: 4px;
  font-size: 10.800px;
  line-height: 13px;
  color: #9aa0a6;
  white-space: nowrap;
}

.empty {
  flex: 1;
  margin: 71.500px 0 0 583.500px;
  color: #5f6368;
}

.empty__title {
  margin: 0;
  font-size: 14.600px;
  font-weight: 400;
  line-height: 20px;
}

.empty__text {
  margin: 11px 0 0;
  font-size: 12.900px;
  line-height: 20px;
}

.empty__link {
  color: #0b57d0;
}

.mail-footer {
  display: flex;
  height: 192px;
  padding-left: 15px;
  font-size: 10.800px;
  line-height: 14px;
  color: #5f6368;
}

.storage {
  width: 198px;
  padding-top: 5px;
}

.storage__bar {
  height: 6px;
  background: #dadce0;
  border-radius: 3px;
}

.storage__fill {
  width: 18px;
  height: 6px;
  background: #5f6368;
  border-radius: 3px;
}

.storage__text {
  display: flex;
  align-items: center;
  gap: 6px;
  margin-top: 7px;
}

.storage__open {
  width: 15px;
  height: 15px;
  fill: #5f6368;
}

.policies {
  margin: 1px 0 0 535.500px;
}

/* windows taskbar */

.taskbar {
  display: flex;
  align-items: stretch;
  flex-shrink: 0;
  height: 40px;
  background: linear-gradient(to right, #213640, #223743 50%, #1b2a40);
}

.taskbar__start {
  display: flex;
  align-items: center;
  justify-content: center;
  width: 48px;
}

.tb-icon {
  width: 17px;
  height: 17px;
}

.app {
  position: relative;
  display: flex;
  align-items: center;
  justify-content: center;
  box-sizing: border-box;
  width: 49px;
}

.app_open {
  margin-left: 3px;
  width: 48px;
  background: #3a4e58;
  box-shadow: inset 0 -2px 0 #76b9ed;
}

.app__icon {
  width: 24px;
  height: 24px;
}

.app_running {
  background: linear-gradient(#76b9ed, #76b9ed) center bottom / 40px 2px no-repeat;
}

.app_active {
  background: #4a5d67;
  box-shadow: inset 0 -2px 0 #76b9ed;
}

.app__badge {
  position: absolute;
  left: 24px;
  top: 18px;
  display: flex;
  align-items: center;
  justify-content: center;
  width: 16px;
  height: 16px;
  color: #f0e8ff;
  font-size: 9px;
  border-radius: 50%;
}

.app__badge_purple {
  background: #4b2da3;
}

.app__badge_orange {
  background: #e66c00;
}

.app__badge_red {
  background: #c0330f;
}

.app__zoom {
  display: flex;
  align-items: center;
  justify-content: center;
  width: 24px;
  height: 24px;
  background: #0b5cff;
  color: #fff;
  font-family: "Liberation Sans", sans-serif;
  font-size: 19px;
  font-weight: bold;
  border-radius: 8px;
}

.tray {
  display: flex;
  align-items: center;
  margin-left: auto;
  color: #fff;
}

.tray__item {
  display: flex;
  align-items: center;
  justify-content: center;
  box-sizing: border-box;
  width: 24px;
  height: 16px;
}

.tray__zoom {
  display: flex;
  align-items: center;
  justify-content: center;
  width: 16px;
  height: 16px;
  background: #0b5cff;
  color: #fff;
  font-family: "Liberation Sans", sans-serif;
  font-size: 12px;
  font-weight: bold;
  border-radius: 50%;
}

.clock {
  margin-left: 2px;
  width: 60px;
  font-family: "Open Sans", Arial, sans-serif;
  font-size: 11.500px;
  line-height: 18px;
  text-align: center;
  color: #fff;
}

.notify {
  position: relative;
  width: 33px;
  height: 30px;
  margin-left: 7px;
}

.notify__icon {
  width: 17px;
  height: 15px;
  margin: 7px 0 0 6px;
}

.notify__count {
  position: absolute;
  right: 1px;
  bottom: 0;
  display: flex;
  align-items: center;
  justify-content: center;
  width: 19px;
  height: 19px;
  background: #3c4650;
  border: 1px solid #aaa;
  box-sizing: border-box;
  border-radius: 50%;
  font-size: 10px;
  font-weight: 700;
  color: #fff;
}

.show-desktop {
  width: 1px;
  height: 40px;
  margin: 0 4px 0 10px;
  background: #5d6b78;
}
```
